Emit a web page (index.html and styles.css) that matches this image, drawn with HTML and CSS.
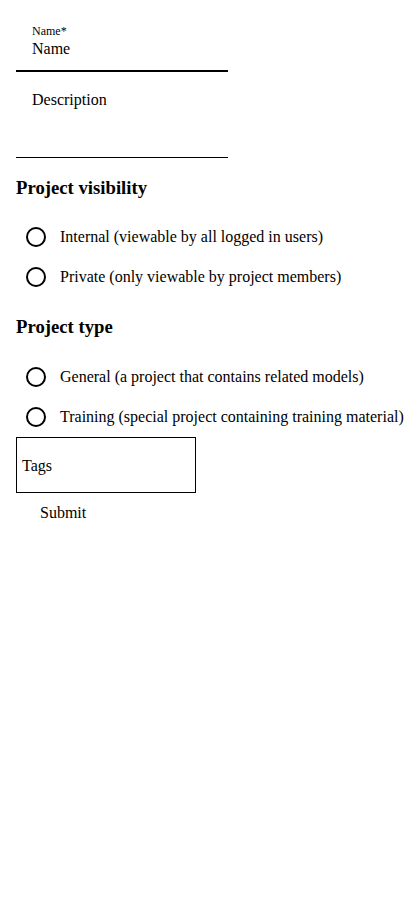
FILE: index.html
```html
<!DOCTYPE html>
<html lang="en">
<head>
<meta charset="utf-8">
<title>New project</title>
<link rel="stylesheet" href="styles.css">
</head>
<body>
<form class="form">
  <div class="field name-field">
    <div class="field-label">Name*</div>
    <div class="field-value name-value">Name</div>
  </div>
  <div class="field desc-field">
    <div class="field-value">Description</div>
  </div>
  <h3 class="section-title">Project visibility</h3>
  <div class="radio-group">
    <label class="radio-row"><span class="radio"></span><span class="radio-text">Internal (viewable by all logged in users)</span></label>
    <label class="radio-row"><span class="radio"></span><span class="radio-text">Private (only viewable by project members)</span></label>
  </div>
  <h3 class="section-title">Project type</h3>
  <div class="radio-group type-group">
    <label class="radio-row"><span class="radio"></span><span class="radio-text">General (a project that contains related models)</span></label>
    <label class="radio-row"><span class="radio"></span><span class="radio-text">Training (special project containing training material)</span></label>
  </div>
  <div class="tags-box">Tags</div>
  <div class="submit">Submit</div>
</form>
</body>
</html>
```
FILE: styles.css
```css
* { box-sizing: border-box; }
html, body { margin: 0; padding: 0; background: #fff; }
body {
  font-family: "Liberation Serif", "Times New Roman", serif;
  font-size: 16px;
  color: #000;
}
.form {
  display: flex;
  flex-direction: column;
  align-items: flex-start;
  padding: 0 16px;
}
.field {
  width: 212px;
  padding: 0 16px;
}
.name-field {
  padding-top: 24px;
  padding-bottom: 11px;
  border-bottom: 2px solid #000;
}
.field-label {
  font-size: 12px;
  line-height: 14px;
}
.field-value {
  line-height: 20px;
}
.name-value { margin-top: 1px; }
.desc-field {
  padding-top: 18px;
  padding-bottom: 47px;
  border-bottom: 1px solid #000;
}
.section-title {
  margin: 19px 0 0;
  font-size: 18.72px;
  line-height: 22px;
  font-weight: bold;
}
.radio-group {
  margin-top: 18px;
  display: flex;
  flex-direction: column;
}
.type-group { margin-top: 19px; }
.radio-row {
  display: flex;
  align-items: center;
  height: 40px;
  padding-left: 10px;
  gap: 14px;
  white-space: nowrap;
}
.radio {
  width: 20px;
  height: 20px;
  border: 2px solid #000;
  border-radius: 50%;
  flex: none;
}
.radio-text { line-height: 20px; }
.tags-box {
  width: 180px;
  height: 56px;
  border: 1px solid #000;
  padding-left: 5px;
  padding-top: 2px;
  display: flex;
  align-items: center;
}
.submit {
  padding: 10px 0 0 24px;
  line-height: 20px;
}
```
